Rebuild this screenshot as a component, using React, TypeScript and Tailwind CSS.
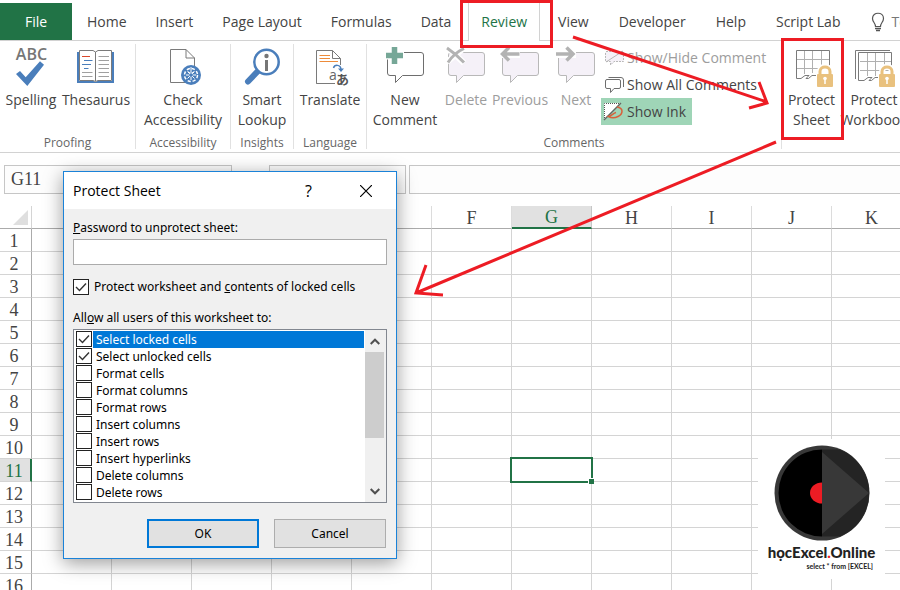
import { useState } from 'react';
import type { ReactNode } from 'react';

const tabsBefore = ['Home', 'Insert', 'Page Layout', 'Formulas', 'Data'];
const tabsAfter = ['View', 'Developer', 'Help', 'Script Lab'];
const columns = ['A', 'B', 'C', 'D', 'E', 'F', 'G', 'H', 'I', 'J', 'K'];
const rows = Array.from({ length: 16 }, (_, i) => i + 1);
const permissions = [
  'Select locked cells',
  'Select unlocked cells',
  'Format cells',
  'Format columns',
  'Format rows',
  'Insert columns',
  'Insert rows',
  'Insert hyperlinks',
  'Delete columns',
  'Delete rows',
];

/* Icons */

function Icon({ children }: { children: ReactNode }) {
  return (
    <svg viewBox="0 0 40 42" className="w-10 h-[42px] overflow-visible" fill="none" aria-hidden="true">
      {children}
    </svg>
  );
}

function SpellingIcon() {
  return (
    <Icon>
      <text x="20.5" y="14" textAnchor="middle" fontSize="16" fontWeight="600" fill="#767676">ABC</text>
      <path d="M5 28 9 25 14.7 31.3 29 15.3 33 18.7 16.3 40Z" fill="#4a7ebb" />
    </Icon>
  );
}

function ThesaurusIcon() {
  return (
    <Icon>
      <path d="M1 6H3V35H17.5L19.5 36 21.5 35H36V6H38V37H1Z" fill="#4a7ebb" />
      <path d="M3.5 4.5H17L19.5 6 22 4.5H35.5V34.5H22L19.5 35.5 17 34.5H3.5ZM19.5 6V35" fill="#fff" stroke="#7a7a7a" />
      <path d="M6 10.5H14" stroke="#d9482b" />
      <path d="M8 14.5H16.5M6 18.5H15M8 22.5H12.5" stroke="#4a7ebb" />
      <path d="M6 26.5H16.5M6 30.5H16.5M22.5 10.5H33M22.5 14.5H33M22.5 18.5H33M22.5 22.5H33M22.5 26.5H33M22.5 30.5H33" stroke="#a0a0a0" />
    </Icon>
  );
}

function AccessibilityIcon() {
  return (
    <Icon>
      <path d="M7.5 3.5H23L31.5 12V36.5H7.5ZM23 3.5V12H31.5" fill="#fff" stroke="#7a7a7a" />
      <circle cx="28" cy="29" r="10" fill="#4a7ebb" />
      <circle cx="28" cy="29" r="6.5" stroke="#fff" strokeWidth="1.5" strokeDasharray="3.2 1.9" />
      <path d="M28 21V28M25.5 25.5 28 28.5 30.5 25.5M23 29H33M28 28V34M24.5 25.5 31.5 32.5M31.5 25.5 24.5 32.5" stroke="#fff" />
      <circle cx="28" cy="29" r="1.8" fill="#4a7ebb" />
    </Icon>
  );
}

function LookupIcon() {
  return (
    <Icon>
      <path d="M17 24 6 35.5" stroke="#4a7ebb" strokeWidth="6" strokeLinecap="round" />
      <circle cx="24.5" cy="16" r="12.2" fill="#fff" stroke="#4a7ebb" strokeWidth="2.5" />
      <circle cx="24.5" cy="10" r="2.2" fill="#767676" />
      <rect x="23" y="14" width="3" height="11" fill="#767676" />
    </Icon>
  );
}

function TranslateIcon() {
  return (
    <Icon>
      <path d="M20 37.5H6.5V4.5H22.5L30.5 12.5V19M22.5 4.5V12.5H30.5" stroke="#7a7a7a" />
      <path d="M9.5 9.5H20M9.5 12.5H20M9.5 15.5H28" stroke="#ed8b3a" />
      <path d="M18 24H40V40H18Z" fill="#fff" />
      <path d="M6.5 37.5H25" stroke="#7a7a7a" />
      <text x="19" y="33.5" fontSize="14" fill="#666">a</text>
      <text x="26" y="38" fontSize="13" fontWeight="600" fill="#555" className="font-['Noto_Sans_CJK_JP',sans-serif]">あ</text>
      <path d="M23.5 22C24.5 18.5 30.5 18 31 23.5" stroke="#4a7ebb" strokeWidth="1.5" />
      <path d="M28 22.5H34L31 26Z" fill="#4a7ebb" />
    </Icon>
  );
}

function Bubble({ muted }: { muted?: boolean }) {
  return (
    <path
      d="M5 6.5H36Q38.5 6.5 38.5 9V27Q38.5 29.5 36 29.5H17.5L10.5 36.5V29.5H5Q2.5 29.5 2.5 27V9Q2.5 6.5 5 6.5Z"
      fill={muted ? '#f5f1f8' : '#fff'}
      stroke={muted ? '#b8b8b8' : '#6e6e6e'}
    />
  );
}

function NewCommentIcon() {
  return (
    <Icon>
      <Bubble />
      <path d="M9.5 0V19M0 9.5H19" stroke="#fff" strokeWidth="8" />
      <path d="M9.5 1V18M1 9.5H18" stroke="#76a797" strokeWidth="5.5" />
    </Icon>
  );
}

function DeleteIcon() {
  return (
    <Icon>
      <Bubble muted />
      <path d="M1 1 18 17M18 2 1 16" stroke="#fff" strokeWidth="6" />
      <path d="M1 2Q10 8 18 16.5M18 2.5Q8 7 2 16.5" stroke="#b3b3b3" strokeWidth="3" />
    </Icon>
  );
}

function PreviousIcon() {
  return (
    <Icon>
      <Bubble muted />
      <path d="M0 8H20" stroke="#fff" strokeWidth="8" />
      <path d="M2 8H19.5M9 1.5 2.5 8 9 14.5" stroke="#b3b3b3" strokeWidth="3.5" />
    </Icon>
  );
}

function NextIcon() {
  return (
    <Icon>
      <Bubble muted />
      <path d="M0 8H20" stroke="#fff" strokeWidth="8" />
      <path d="M0 8H17.5M10.5 1.5 17 8 10.5 14.5" stroke="#b3b3b3" strokeWidth="3.5" />
    </Icon>
  );
}

function Lock() {
  return (
    <g>
      <path d="M24 25H41V42H24Z" fill="#fff" />
      <path d="M28 30V25.5C28 19 38 19 38 25.5V30" stroke="#fff" strokeWidth="6" />
      <path d="M28 30V25.5C28 19.5 38 19.5 38 25.5V30" stroke="#e9c17e" strokeWidth="3" />
      <rect x="25" y="28" width="16" height="13" rx="1" fill="#e9c17e" />
      <circle cx="33" cy="32.5" r="1.8" fill="#fff" />
      <path d="M33 33V38" stroke="#fff" strokeWidth="1.5" />
    </g>
  );
}

function ProtectSheetIcon() {
  return (
    <Icon>
      <path d="M12.5 5V28M20.5 5V27M29.5 5V27M5 13.5H37M5 22.5H37" stroke="#b0b0b0" />
      <path d="M24 29.5H20L16.5 32.5H14L17 29.5H13L9 32.5H4.5V4.5H37.5V21" stroke="#7a7a7a" />
      <Lock />
    </Icon>
  );
}

function ProtectWorkbookIcon() {
  return (
    <Icon>
      <path d="M1.5 33V4.5H36" stroke="#7a7a7a" />
      <path d="M13.5 7V30M21.5 7V30M30.5 7V30M6 15.5H38M6 24.5H38" stroke="#b0b0b0" />
      <path d="M25 31.5H21L17.5 34.5H15L18 31.5H14L10 34.5H4.5V6.5H37.5V21" stroke="#7a7a7a" />
      <Lock />
    </Icon>
  );
}

function SmallIcon({ children }: { children: ReactNode }) {
  return (
    <svg viewBox="0 0 20 20" className="w-5 h-5 shrink-0" fill="none" aria-hidden="true">
      {children}
    </svg>
  );
}

/* Ribbon */

function BigButton({ icon, label, className, muted }: { icon: ReactNode; label: ReactNode; className: string; muted?: boolean }) {
  return (
    <button disabled={muted} className={`flex flex-col items-center gap-0.5 pt-0.5 shrink-0 whitespace-nowrap leading-5 ${muted ? 'text-[#9d9d9d]' : 'text-[#444]'} ${className}`}>
      {icon}
      <span>{label}</span>
    </button>
  );
}

function Group({ name, className, children }: { name: string; className: string; children: ReactNode }) {
  return (
    <section className={`flex flex-col justify-between border-r border-[#e1e1e1] shrink-0 ${className}`}>
      <div className="flex">{children}</div>
      <div className="text-center text-xs leading-3 text-[#666]">{name}</div>
    </section>
  );
}

function Ribbon() {
  return (
    <div className="flex items-stretch h-28 pt-[3px] pb-[3px] border-b border-[#d2d2d2] overflow-hidden">
      <Group name="Proofing" className="w-[136px]">
        <BigButton className="w-[62px]" icon={<SpellingIcon />} label="Spelling" />
        <BigButton className="w-[68px]" icon={<ThesaurusIcon />} label="Thesaurus" />
      </Group>
      <Group name="Accessibility" className="w-[95px]">
        <BigButton className="w-[94px]" icon={<AccessibilityIcon />} label={<>Check<br />Accessibility</>} />
      </Group>
      <Group name="Insights" className="w-[63px]">
        <BigButton className="w-[62px]" icon={<LookupIcon />} label={<>Smart<br />Lookup</>} />
      </Group>
      <Group name="Language" className="w-[73px]">
        <BigButton className="w-[72px]" icon={<TranslateIcon />} label="Translate" />
      </Group>
      <Group name="Comments" className="w-[415px]">
        <BigButton className="w-[76px]" icon={<NewCommentIcon />} label={<>New<br />Comment</>} />
        <BigButton className="w-[46px]" muted icon={<DeleteIcon />} label="Delete" />
        <BigButton className="w-[62px]" muted icon={<PreviousIcon />} label="Previous" />
        <BigButton className="w-[50px]" muted icon={<NextIcon />} label="Next" />
        <div className="flex flex-col items-start grow whitespace-nowrap text-[#444]">
          <button disabled className="flex items-center gap-0.5 h-[27px] px-1 text-[#9d9d9d]">
            <SmallIcon>
              <path d="M1 3.5H18.5V13.5H9L5.5 17V13.5H.5V4" fill="#f5f1f8" stroke="#b8b8b8" strokeDasharray="2 1" />
              <path d="M1 14 18 3" stroke="#b8b8b8" />
            </SmallIcon>
            Show/Hide Comment
          </button>
          <button className="flex items-center gap-0.5 h-[27px] px-1">
            <SmallIcon>
              <path d="M3.5 2.5H16Q18.5 2.5 18.5 5V12" stroke="#6e6e6e" />
              <path d="M2 4.5H14Q15.5 4.5 15.5 6V12Q15.5 13.5 14 13.5H9L5.5 17.5V13.5H2Q.5 13.5.5 12V6Q.5 4.5 2 4.5Z" stroke="#6e6e6e" />
            </SmallIcon>
            Show All Comments
          </button>
          <button aria-pressed="true" className="flex items-center gap-1 h-[27px] pl-0.5 pr-1.5 bg-[#9fd5b7]">
            <SmallIcon>
              <path d="M1 1H17L1 17Z" fill="#fff" />
              <path d="M1.5 18V1.5H17" stroke="#555" strokeDasharray="1 1" />
              <path d="M1 18 18 1" stroke="#666" strokeWidth="1.3" />
              <path d="M14 5C21 6 20 12 15 14.5 12 16 8 16 5.5 14.5 9 14 10 11 13 10.5" stroke="#d9603b" strokeWidth="1.5" />
            </SmallIcon>
            Show Ink
          </button>
        </div>
      </Group>
      <div className="flex items-start shrink-0">
        <BigButton className="w-[59px]" icon={<ProtectSheetIcon />} label={<>Protect<br />Sheet</>} />
        <BigButton className="w-[66px]" icon={<ProtectWorkbookIcon />} label={<>Protect<br />Workbook</>} />
      </div>
    </div>
  );
}

function TabBar() {
  return (
    <nav className="flex h-[41px] pt-[3px] shadow-[inset_0_-1px_0_#d2d2d2] whitespace-nowrap overflow-hidden text-[#444]">
      <button className="w-[72px] shrink-0 mb-px bg-[#217346] text-white">File</button>
      {tabsBefore.map((tab) => (
        <button key={tab} className="shrink-0 pl-[15px] pr-3.5">{tab}</button>
      ))}
      <button className="shrink-0 px-3 mx-[3px] border-x border-[#d2d2d2] bg-white text-[#217346]">Review</button>
      {tabsAfter.map((tab) => (
        <button key={tab} className="shrink-0 px-[15px]">{tab}</button>
      ))}
      <button className="flex items-center gap-1.5 shrink-0 pl-4 text-[#777]">
        <svg viewBox="0 0 14 20" className="w-3.5 h-5" fill="none" stroke="#555" aria-hidden="true">
          <path d="M4.5 14.5C4.5 11 1.5 10 1.5 6.5 1.5-.5 12.5-.5 12.5 6.5 12.5 10 9.5 11 9.5 14.5Z" strokeWidth="1.2" />
          <path d="M4 16.5H10M5 18.5H9" strokeWidth="1.5" />
        </svg>
        Tell me
      </button>
    </nav>
  );
}

/* Sheet */

function FormulaBar() {
  return (
    <div className="flex gap-[3px] h-[41px] pl-1 pt-3 font-['Liberation_Serif',serif] text-lg text-[#444]">
      <input aria-label="Name box" defaultValue="G11" className="w-[228px] h-[29px] px-1.5 mr-[34px] border border-[#c6c6c6] bg-[#fdfdfd]" />
      <div className="w-[137px] h-[29px] border border-[#c6c6c6] bg-[#fdfdfd]" />
      <input aria-label="Formula bar" className="grow h-[29px] px-1.5 border border-r-0 border-[#c6c6c6] bg-[#fdfdfd]" />
    </div>
  );
}

function Sheet() {
  return (
    <table className="mt-3 w-[912px] table-fixed border-separate border-spacing-0 font-['Liberation_Serif',serif] text-lg leading-5 text-[#444]">
      <thead>
        <tr>
          <th className="w-8 h-[23px] p-0 border-r border-b border-r-[#d4d4d4] border-b-[#ababab]">
            <svg viewBox="0 0 15 15" className="w-[15px] h-[15px] ml-auto mr-[3px]" aria-hidden="true">
              <path d="M15 0V15H0Z" fill="#dfdfdf" />
            </svg>
          </th>
          {columns.map((col) => (
            <th
              key={col}
              scope="col"
              className={
                col === 'G'
                  ? 'w-20 p-0 pt-px font-normal border-r border-b-2 border-r-[#c6c6c6] border-b-[#217346] bg-[#e1e1e1] text-[#217346]'
                  : 'w-20 p-0 pt-0.5 font-normal border-r border-b border-r-[#dcdcdc] border-b-[#ababab]'
              }
            >
              {col}
            </th>
          ))}
        </tr>
      </thead>
      <tbody>
        {rows.map((row) => (
          <tr key={row}>
            <th
              scope="row"
              className={
                row === 11
                  ? 'h-[23px] p-0 pt-0.5 pr-0.5 font-normal border-r-2 border-b border-r-[#217346] border-b-[#d4d4d4] bg-[#e1e1e1] text-[#217346]'
                  : 'h-[23px] p-0 pt-0.5 pr-[3px] font-normal border-r border-b border-r-[#ababab] border-b-[#d4d4d4]'
              }
            >
              {row}
            </th>
            {columns.map((col) =>
              row === 11 && col === 'G' ? (
                <td key={col} className="relative z-10 p-0 border-r border-b border-[#d4d4d4]">
                  <div className="absolute -inset-0.5 border-2 border-[#217346]">
                    <div className="absolute -right-[3px] -bottom-[3px] w-1.5 h-1.5 bg-[#217346] border-t border-l border-white" />
                  </div>
                </td>
              ) : (
                <td key={col} className="p-0 border-r border-b border-[#d4d4d4]" />
              )
            )}
          </tr>
        ))}
      </tbody>
    </table>
  );
}

/* Dialog */

function Checkbox({ id, checked, onChange }: { id: string; checked: boolean; onChange: () => void }) {
  return (
    <span className="grid w-4 h-4 shrink-0">
      <input id={id} type="checkbox" checked={checked} onChange={onChange} className="peer col-start-1 row-start-1 appearance-none w-4 h-4 border border-[#222] bg-white" />
      <svg viewBox="0 0 16 16" className="col-start-1 row-start-1 w-4 h-4 invisible peer-checked:visible pointer-events-none" fill="none" aria-hidden="true">
        <path d="M3 8 6.5 11.5 13 4.5" stroke="#333" strokeWidth="1.4" />
      </svg>
    </span>
  );
}

function ProtectDialog() {
  const [protect, setProtect] = useState(true);
  const [allowed, setAllowed] = useState<string[]>(permissions.slice(0, 2));

  const toggle = (name: string) =>
    setAllowed((list) => (list.includes(name) ? list.filter((n) => n !== name) : [...list, name]));

  return (
    <div
      role="dialog"
      aria-label="Protect Sheet"
      className="absolute z-20 left-[63px] top-[171px] w-[334px] border border-[#1a82d8] bg-[#f0f0f0] font-['Noto_Sans',sans-serif] text-xs leading-4 text-black shadow-[0_4px_18px_rgba(0,0,0,0.4)]"
    >
      <div className="flex items-center h-[37px] pl-[9px] pr-px bg-white font-['Open_Sans',sans-serif] text-sm">
        <h2 className="grow">Protect Sheet</h2>
        <button aria-label="Help" className="w-[57px] text-base">?</button>
        <button aria-label="Close" className="w-[58px] flex justify-center">
          <svg viewBox="0 0 12 12" className="w-3 h-3" stroke="#000" aria-hidden="true">
            <path d="M0 0 12 12M12 0 0 12" strokeWidth="1.2" />
          </svg>
        </button>
      </div>

      <form className="px-[9px] pt-[11px] pb-2.5" onSubmit={(e) => e.preventDefault()}>
        <label htmlFor="password" className="block"><u>P</u>assword to unprotect sheet:</label>
        <input id="password" type="password" className="block w-full h-[26px] mt-[3px] px-1 border border-[#ababab] bg-white" />

        <div className="flex items-center gap-[5px] mt-[13px]">
          <Checkbox id="protect" checked={protect} onChange={() => setProtect(!protect)} />
          <label htmlFor="protect" className="pt-px">Protect worksheet and <u>c</u>ontents of locked cells</label>
        </div>

        <p id="allow-label" className="mt-[15px]">All<u>o</u>w all users of this worksheet to:</p>
        <div className="flex mt-[3px] border border-[#828790] bg-white" role="group" aria-labelledby="allow-label">
          <ul className="grow pl-0.5 pt-px pr-px pb-px">
            {permissions.map((name, i) => (
              <li key={name} className="flex h-[17px]">
                <Checkbox id={`perm-${i}`} checked={allowed.includes(name)} onChange={() => toggle(name)} />
                <label htmlFor={`perm-${i}`} className={i === 0 ? 'grow ml-px pl-[3px] pt-px bg-[#0078d7] text-white' : 'grow ml-px pl-[3px] pt-px'}>
                  {name}
                </label>
              </li>
            ))}
          </ul>
          <div className="flex flex-col w-[21px] pr-0.5 bg-[#f0f0f0]">
            <button type="button" aria-label="Scroll up" className="flex items-center justify-center h-[22px]">
              <svg viewBox="0 0 10 7" className="w-2.5 h-[7px]" fill="none" stroke="#505050" strokeWidth="2" aria-hidden="true">
                <path d="M.7 6 5 1.7 9.3 6" />
              </svg>
            </button>
            <div className="grow">
              <div className="h-[86px] bg-[#cdcdcd]" />
            </div>
            <button type="button" aria-label="Scroll down" className="flex items-center justify-center h-[22px]">
              <svg viewBox="0 0 10 7" className="w-2.5 h-[7px]" fill="none" stroke="#505050" strokeWidth="2" aria-hidden="true">
                <path d="M.7 1 5 5.3 9.3 1" />
              </svg>
            </button>
          </div>
        </div>

        <div className="flex justify-end gap-[15px] mt-4 pr-px">
          <button className="w-28 h-[29px] border-2 border-[#0078d7] bg-[#e1e1e1]">OK</button>
          <button type="button" className="w-28 h-[29px] border border-[#adadad] bg-[#e1e1e1]">Cancel</button>
        </div>
      </form>
    </div>
  );
}

function Logo() {
  return (
    <div className="absolute z-20 left-[758px] top-[439px] w-[127px] h-[140px] pt-1.5 flex flex-col items-center bg-white font-['Lato',sans-serif] text-[#222]">
      <svg viewBox="0 0 96 96" className="w-24 h-24" aria-hidden="true">
        <circle cx="48" cy="48" r="47.5" fill="#383838" />
        <path d="M48 4.5A43.5 43.5 0 0 0 48 91.5Z" fill="#000" />
        <path d="M48 4.5H66A47 47 0 0 1 66 91.5H48Z" fill="#242424" />
        <path d="M48 7 95 48 48 89Z" fill="#383838" />
        <path d="M48 37.5A12 10.5 0 0 0 48 58.5Z" fill="#ed1c24" />
      </svg>
      <div className="pt-px text-[15px] leading-5 font-black">họcExcel<span className="text-[#ed1c24]">.</span>Online</div>
      <div className="self-end pr-3 text-[7px] leading-2 font-bold">select * from [EXCEL]</div>
    </div>
  );
}

/* Red boxes and arrows that show the steps */
function Annotations() {
  return (
    <svg viewBox="0 0 900 590" className="absolute z-30 left-0 top-0 w-[900px] h-[590px] pointer-events-none" fill="none" stroke="#ed1c24" strokeWidth="3" aria-hidden="true">
      <rect x="461.5" y="1.5" width="90" height="45" />
      <rect x="782.5" y="39.5" width="60" height="99" />
      <path d="M573 37 767 102M759 82 767 103 749 108" />
      <path d="M776 142 416 293M426 265 416 293 443 295" />
    </svg>
  );
}

export default function App() {
  return (
    <main className="relative h-screen overflow-hidden bg-white font-['Open_Sans',sans-serif] text-sm">
      <TabBar />
      <Ribbon />
      <FormulaBar />
      <Sheet />
      <ProtectDialog />
      <Logo />
      <Annotations />
    </main>
  );
}
